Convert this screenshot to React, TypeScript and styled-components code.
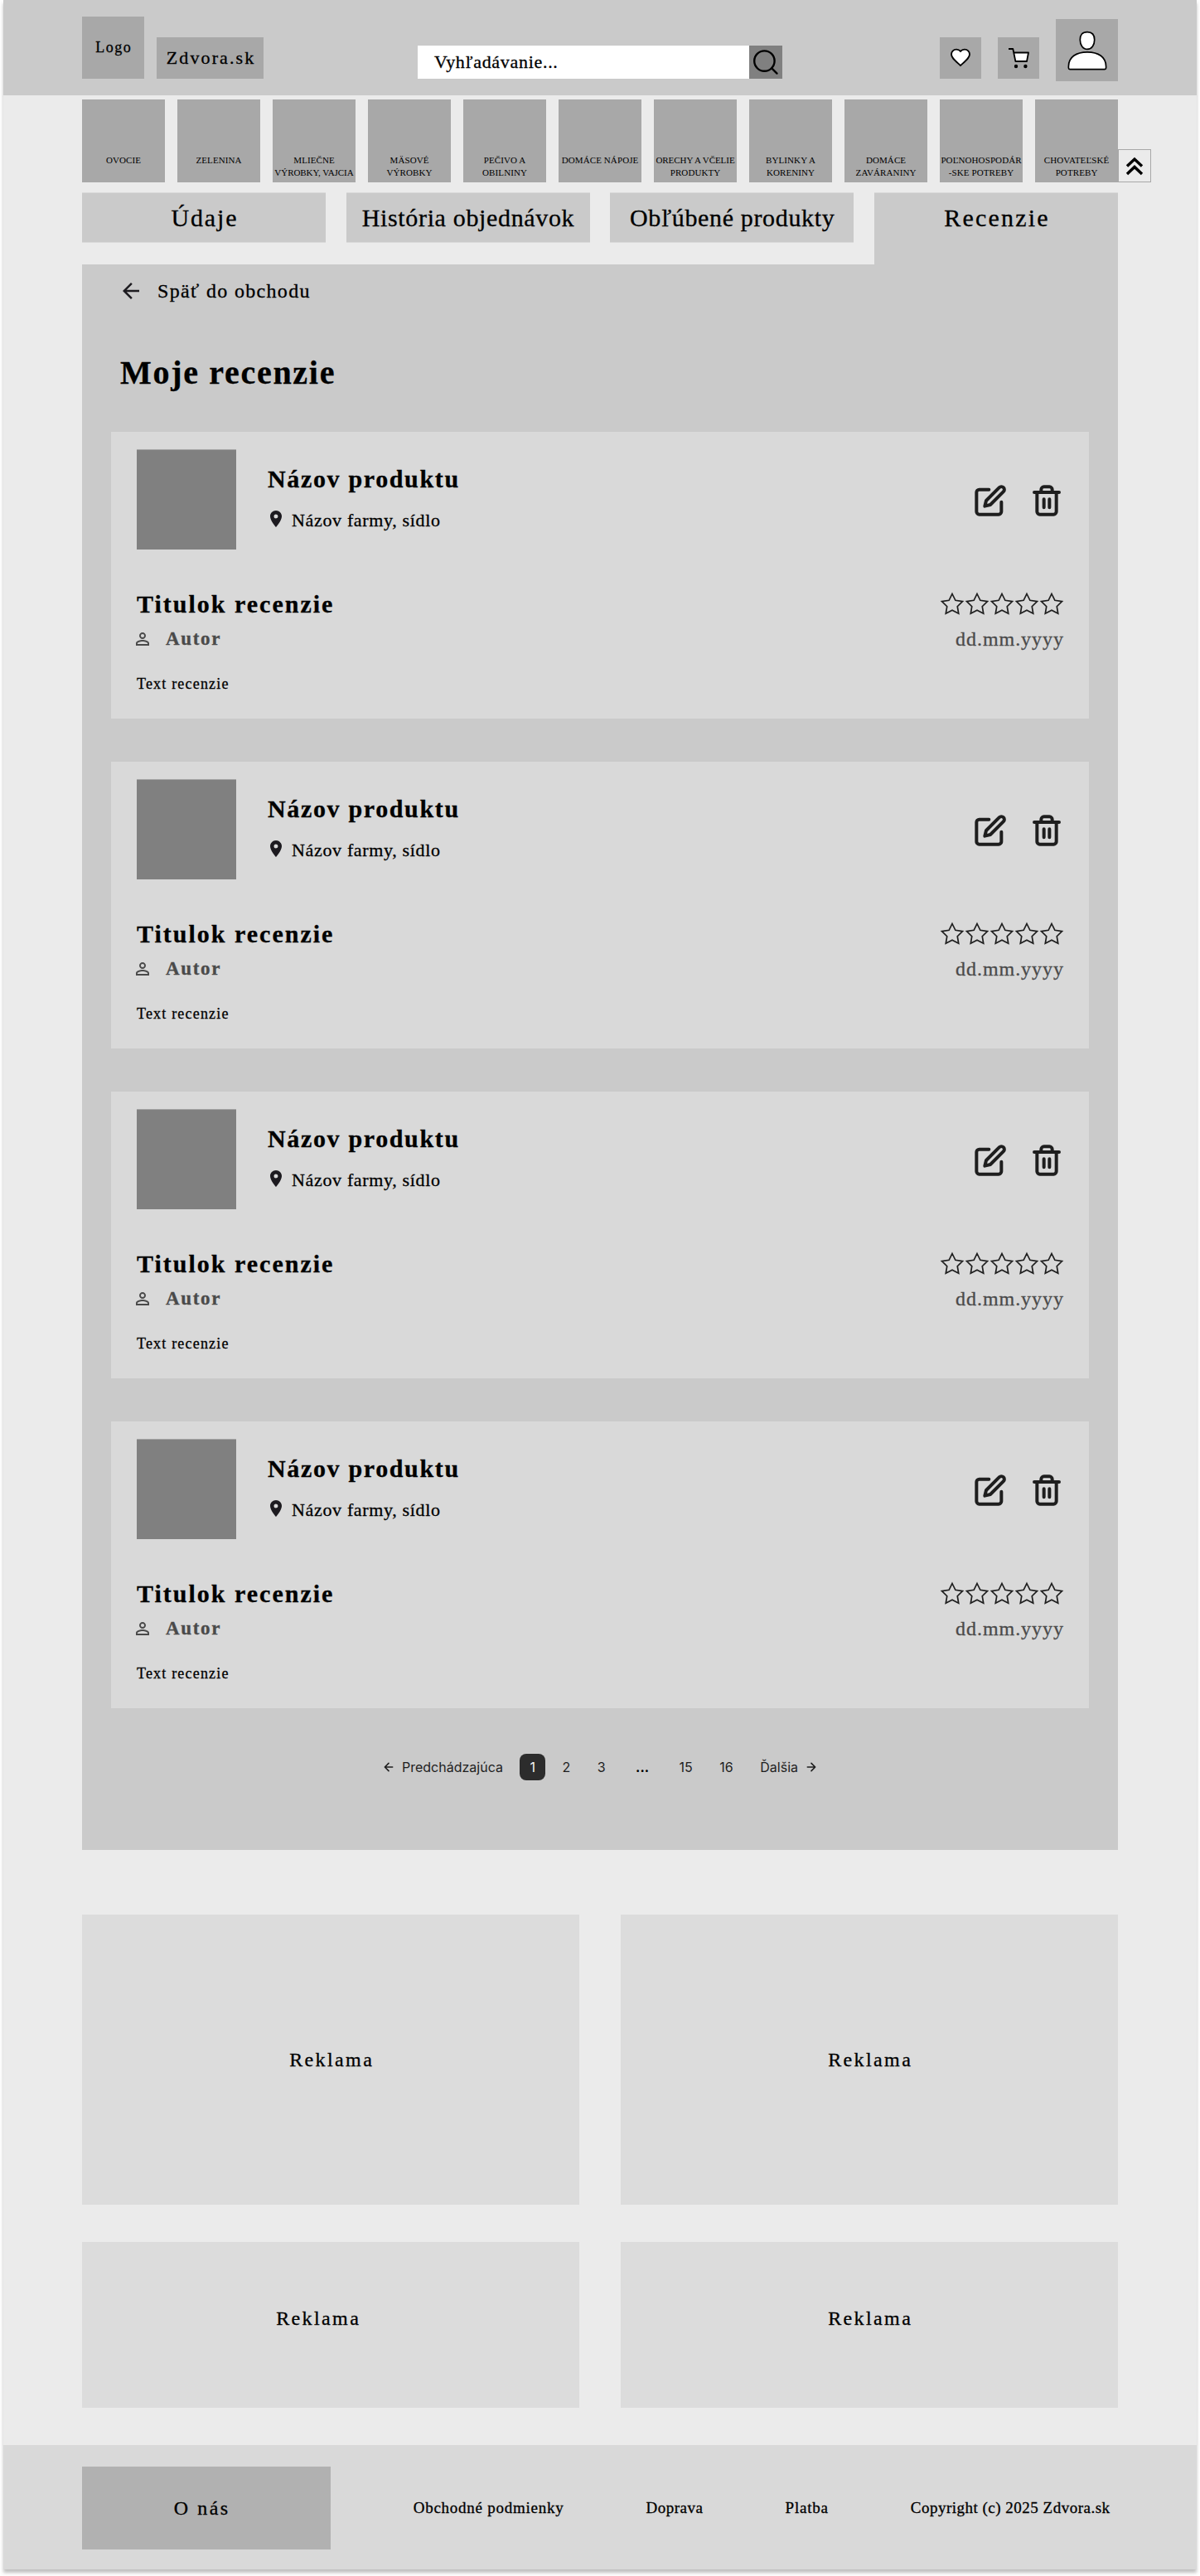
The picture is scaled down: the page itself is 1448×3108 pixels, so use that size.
import React from 'react';
import styled, { createGlobalStyle } from 'styled-components';

const GlobalStyle = createGlobalStyle`
  * { box-sizing: border-box; }
  body { margin: 0; background: #fff; }
`;

const Page = styled.div`
  width: 1440px;
  height: 3100px;
  margin: 0 4px 8px;
  background: #ebebeb;
  box-shadow: 0 4px 4px rgba(0, 0, 0, 0.25);
  color: #000;
  font-family: "Liberation Serif", "Times New Roman", serif;
  -webkit-text-stroke: 0.3px currentColor;
`;

const Label = styled.span<{ $size: number; $spacing?: number; $bold?: boolean }>`
  font-size: ${p => p.$size}px;
  letter-spacing: ${p => p.$spacing ?? 0}px;
  margin-right: ${p => -(p.$spacing ?? 0)}px;
  font-weight: ${p => (p.$bold ? 700 : 400)};
  white-space: nowrap;
`;

const Header = styled.header`
  display: flex;
  align-items: flex-end;
  height: 115px;
  padding: 0 95px 20px;
  background: #cacaca;
`;

const Tile = styled.a<{ $width: number; $height: number }>`
  display: flex;
  align-items: center;
  justify-content: center;
  width: ${p => p.$width}px;
  height: ${p => p.$height}px;
  background: #a8a8a8;
`;

const Brand = styled.div`
  display: flex;
  align-items: flex-end;
  gap: 15px;
`;

const Search = styled.div`
  display: flex;
  height: 40px;
  margin-left: 186px;
`;

const SearchField = styled.div`
  display: flex;
  align-items: center;
  width: 400px;
  padding-left: 20px;
  background: #fff;
`;

const SearchButton = styled.button`
  width: 40px;
  height: 40px;
  padding: 0;
  border: 0;
  background: #808080;
  svg { display: block; }
`;

const Actions = styled.div`
  display: flex;
  align-items: flex-end;
  gap: 20px;
  margin-left: auto;
  > :last-child { margin-bottom: -3px; }
`;

const Categories = styled.nav`
  display: flex;
  align-items: flex-end;
  gap: 15px;
  margin: 5px 0 0 95px;
`;

const Category = styled.a`
  display: flex;
  flex-direction: column;
  align-items: center;
  width: 100px;
  height: 100px;
  padding-top: 66px;
  background: #a8a8a8;
  line-height: 15px;
  -webkit-text-stroke-width: 0;
`;

const CollapseButton = styled.button`
  width: 40px;
  height: 40px;
  margin-left: -15px;
  padding: 0;
  border: 1px solid #a8a8a8;
  background: #ebebeb;
  svg { display: block; margin: -1px; }
`;

const Tabs = styled.div`
  display: flex;
  justify-content: space-between;
  width: 1250px;
  height: 87px;
  margin: 12px 0 0 95px;
`;

const Tab = styled.div<{ $active?: boolean }>`
  display: flex;
  align-items: center;
  justify-content: center;
  width: 294px;
  height: ${p => (p.$active ? 87 : 61)}px;
  padding-bottom: ${p => (p.$active ? 26 : 0)}px;
  border-top: 1px solid #dadada;
  border-bottom: ${p => (p.$active ? '0' : '1px solid #dadada')};
  background: #cacaca;
`;

const Panel = styled.main`
  width: 1250px;
  height: 1913px;
  margin-left: 95px;
  padding: 0 35px;
  background: #cacaca;
`;

const BackLink = styled.a`
  display: flex;
  align-items: center;
  gap: 17px;
  height: 64px;
  padding-left: 9px;
`;

const Heading = styled.h1`
  margin: 37px 0 41px 11px;
  line-height: 60px;
  font-size: 40px;
  letter-spacing: 1.7px;
`;

const Reviews = styled.section`
  display: flex;
  flex-direction: column;
  gap: 52px;
`;

const Card = styled.article`
  height: 346px;
  padding: 21px 31px 0;
  background: #d9d9d9;
`;

const ProductRow = styled.div`
  display: flex;
  height: 121px;
`;

const Photo = styled.div`
  width: 120px;
  height: 121px;
  background: #808080;
  border-top: 1px solid #a5a5a5;
`;

const ProductInfo = styled.div`
  flex: 1;
  padding: 16px 0 0 38px;
`;

const ProductName = styled.div`
  display: flex;
  line-height: 40px;
  margin-bottom: 15px;
`;

const Farm = styled.div`
  display: flex;
  align-items: center;
  gap: 7px;
  line-height: 30px;
  svg { margin: 0 0 4px -2px; }
`;

const CardActions = styled.div`
  display: flex;
  align-items: center;
  gap: 28px;
  padding-top: 2px;
`;

const Line = styled.div<{ $top: number; $height: number; $muted?: boolean }>`
  display: flex;
  align-items: center;
  justify-content: space-between;
  height: ${p => p.$height}px;
  margin-top: ${p => p.$top}px;
  color: ${p => (p.$muted ? '#4a4a4a' : '#000')};
`;

const Stars = styled.div`
  display: flex;
  margin-right: -1px;
`;

const Author = styled.div`
  display: flex;
  align-items: center;
  gap: 16px;
  margin-left: -5px;
`;

const Pagination = styled.nav`
  display: flex;
  justify-content: center;
  gap: 8.5px;
  margin-top: 55px;
  font: 400 16px/16px Inter, sans-serif;
  -webkit-text-stroke-width: 0;
  color: #1e1e1e;
`;

const PageItem = styled.a<{ $current?: boolean; $wide?: boolean }>`
  display: flex;
  align-items: center;
  justify-content: center;
  gap: 8px;
  height: 32px;
  padding: 0 ${p => (p.$wide ? 16 : 12)}px;
  border-radius: 8px;
  background: ${p => (p.$current ? '#2c2c2c' : 'transparent')};
  color: ${p => (p.$current ? '#f5f5f5' : p.$wide ? '#000' : 'inherit')};
  font-weight: ${p => (p.$wide ? 700 : 400)};
`;

const Ads = styled.section`
  display: grid;
  grid-template-columns: 600px 600px;
  grid-template-rows: 350px 200px;
  gap: 45px 50px;
  margin: 78px 0 45px 95px;
`;

const Ad = styled.div<{ $right?: number; $bottom?: number }>`
  display: flex;
  align-items: center;
  justify-content: center;
  padding: 0 ${p => p.$right ?? 0}px ${p => p.$bottom ?? 0}px 0;
  background: #dcdcdc;
`;

const Footer = styled.footer`
  display: flex;
  align-items: center;
  gap: 99.7px;
  height: 150px;
  padding: 2px 0 0 95px;
  background: #d9d9d9;
`;

const About = styled.a`
  display: flex;
  align-items: center;
  justify-content: center;
  width: 300px;
  height: 100px;
  padding-right: 13px;
  background: #b1b1b1;
`;

const HeartIcon = () => (
  <svg width="26" height="26" viewBox="-1 -0.5 26 26" fill="#fff" stroke="#000" strokeWidth="1.7">
    <path transform="matrix(1.1 0 0 1.08 -1.2 -1.1)" d="M12 21 10.6 19.7C5.4 15 2 12.3 2 8.5 2 5.4 4.4 3 7.5 3c1.7 0 3.4.8 4.5 2.1C13.1 3.8 14.8 3 16.5 3 19.6 3 22 5.4 22 8.5c0 3.800-3.400 6.500-8.600 11.200z" />
  </svg>
);

const CartIcon = () => (
  <svg width="26" height="28" viewBox="0 0 26 28">
    <path d="M7.300 7.500H25L23 18H9.400z" fill="#fff" />
    <path d="M1 3H6.300L9.400 18H23L25 7.500H7.300" fill="none" stroke="#000" strokeWidth="1.8" strokeLinejoin="round" />
    <circle cx="10" cy="24" r="2.200" />
    <circle cx="21.400" cy="24" r="2.200" />
  </svg>
);

const ProfileIcon = () => (
  <svg width="48" height="48" viewBox="0 0 48 48" fill="#fff" stroke="#000" strokeWidth="1.7">
    <path d="M24 1.600C30 1.600 32.700 5 32.700 11S29.500 22.400 24 22.400 15.300 17 15.300 11 18 1.600 24 1.600Z" />
    <path d="M24 25.800C37.500 25.800 46.600 32 46.600 43v2q0 1.600-1.600 1.600H3q-1.600 0-1.600-1.600v-2C1.400 32 10.500 25.800 24 25.800Z" />
  </svg>
);

const SearchIcon = () => (
  <svg width="40" height="40" viewBox="0 0 40 40" fill="none" stroke="#000" strokeWidth="2.400" strokeLinecap="round">
    <circle cx="18.400" cy="18.600" r="12.200" />
    <path d="M27.200 27.300 33.500 33.600" />
  </svg>
);

const DoubleUpIcon = () => (
  <svg width="40" height="40" viewBox="0 0 40 40" fill="none" stroke="#000" strokeWidth="3.400">
    <path d="M11 20.600 20 12l9 8.600M11 30 20 21.400 29 30" />
  </svg>
);

const BackIcon = () => (
  <svg width="30" height="30" viewBox="0 0 24 24" fill="#1d1b20">
    <path d="M20 11H7.830l5.590-5.590L12 4l-8 8 8 8 1.410-1.410L7.830 13H20z" />
  </svg>
);

const PinIcon = () => (
  <svg width="24" height="24" viewBox="0 0 24 24" fill="#1d1b20">
    <path d="M12 2C8.130 2 5 5.130 5 9c0 5.250 7 13 7 13s7-7.750 7-13c0-3.870-3.130-7-7-7zm0 9.500a2.500 2.500 0 1 1 0-5 2.500 2.500 0 0 1 0 5z" />
  </svg>
);

const PersonIcon = () => (
  <svg width="24" height="24" viewBox="0 0 24 24" fill="#4a4a4a">
    <path d="M12 5.900a2.100 2.100 0 1 1 0 4.200 2.100 2.100 0 0 1 0-4.200m0 9c2.970 0 6.100 1.460 6.100 2.100v1.100H5.900V17c0-.640 3.130-2.100 6.100-2.100M12 4C9.790 4 8 5.790 8 8s1.790 4 4 4 4-1.790 4-4-1.790-4-4-4zm0 9c-2.670 0-8 1.340-8 4v3h16v-3c0-2.660-5.330-4-8-4z" />
  </svg>
);

const EditIcon = () => (
  <svg width="40" height="40" viewBox="0 0 24 24" fill="none" stroke="#1e1e1e" strokeWidth="2.400" strokeLinecap="round" strokeLinejoin="round">
    <path d="M11 4H4a2 2 0 0 0-2 2v14a2 2 0 0 0 2 2h14a2 2 0 0 0 2-2v-7" />
    <path d="M18.500 2.500a2.121 2.121 0 0 1 3 3L12 15l-4 1 1-4 9.500-9.500z" />
  </svg>
);

const TrashIcon = () => (
  <svg width="40" height="40" viewBox="0 0 24 24" fill="none" stroke="#1e1e1e" strokeWidth="2.400" strokeLinecap="round" strokeLinejoin="round">
    <path d="M3 6h18M19 6v14a2 2 0 0 1-2 2H7a2 2 0 0 1-2-2V6m3 0V4a2 2 0 0 1 2-2h4a2 2 0 0 1 2 2v2M10 11v6M14 11v6" />
  </svg>
);

const StarIcon = () => (
  <svg width="30" height="30" viewBox="0 0 24 24" fill="none" stroke="#1e1e1e" strokeWidth="1.350">
    <path d="M12 2l3.090 6.260L22 9.270l-5 4.870 1.180 6.880L12 17.770l-6.180 3.250L7 14.140 2 9.270l6.910-1.010z" />
  </svg>
);

const ArrowIcon = ({ next }: { next?: boolean }) => (
  <svg width="16" height="16" viewBox="0 0 16 16" fill="none" stroke="#1e1e1e" strokeWidth="1.600" strokeLinecap="round" strokeLinejoin="round">
    <path d={next ? 'M3.330 8h9.340M8 3.330 12.670 8 8 12.670' : 'M12.670 8H3.330M8 12.670 3.330 8 8 3.330'} />
  </svg>
);

const categories = [
  ['OVOCIE'],
  ['ZELENINA'],
  ['MLIEČNE', 'VÝROBKY, VAJCIA'],
  ['MÄSOVÉ', 'VÝROBKY'],
  ['PEČIVO A', 'OBILNINY'],
  ['DOMÁCE NÁPOJE'],
  ['ORECHY A VČELIE', 'PRODUKTY'],
  ['BYLINKY A', 'KORENINY'],
  ['DOMÁCE', 'ZAVÁRANINY'],
  ['POĽNOHOSPODÁR', '-SKE POTREBY'],
  ['CHOVATEĽSKÉ', 'POTREBY'],
];

const tabs = [
  { name: 'Údaje', spacing: 1.9 },
  { name: 'História objednávok', spacing: 0.65 },
  { name: 'Obľúbené produkty', spacing: 0.65 },
  { name: 'Recenzie', spacing: 2.2, active: true },
];

const ReviewCard = () => (
  <Card>
    <ProductRow>
      <Photo />
      <ProductInfo>
        <ProductName><Label $size={30} $spacing={1.65} $bold>Názov produktu</Label></ProductName>
        <Farm><PinIcon /><Label $size={22} $spacing={0.66}>Názov farmy, sídlo</Label></Farm>
      </ProductInfo>
      <CardActions><EditIcon /><TrashIcon /></CardActions>
    </ProductRow>
    <Line $top={46} $height={40}>
      <Label $size={30} $spacing={2} $bold>Titulok recenzie</Label>
      <Stars>{[1, 2, 3, 4, 5].map(n => <StarIcon key={n} />)}</Stars>
    </Line>
    <Line $top={7} $height={30} $muted>
      <Author><PersonIcon /><Label $size={23} $spacing={1.68} $bold>Autor</Label></Author>
      <Label $size={24} $spacing={0.96}>dd.mm.yyyy</Label>
    </Line>
    <Line $top={27} $height={24}><Label $size={18} $spacing={1.19}>Text recenzie</Label></Line>
  </Card>
);

const Advert = (props: { right?: number; bottom?: number }) => (
  <Ad $right={props.right} $bottom={props.bottom}><Label $size={24} $spacing={2.4}>Reklama</Label></Ad>
);

export default function App() {
  return (
    <>
      <GlobalStyle />
      <Page>
        <Header>
          <Brand>
            <Tile $width={75} $height={75}><Label $size={18} $spacing={1.5}>Logo</Label></Tile>
            <Tile $width={129} $height={50}><Label $size={22} $spacing={2.1}>Zdvora.sk</Label></Tile>
          </Brand>
          <Search>
            <SearchField><Label $size={22} $spacing={0.7}>Vyhľadávanie...</Label></SearchField>
            <SearchButton><SearchIcon /></SearchButton>
          </Search>
          <Actions>
            <Tile $width={50} $height={50}><HeartIcon /></Tile>
            <Tile $width={50} $height={50}><CartIcon /></Tile>
            <Tile $width={75} $height={75}><ProfileIcon /></Tile>
          </Actions>
        </Header>
        <Categories>
          {categories.map(lines => (
            <Category key={lines[0]}>
              {lines.map(line => <Label key={line} $size={11} $spacing={line.length > 14 ? -0.05 : 0.1}>{line}</Label>)}
            </Category>
          ))}
          <CollapseButton><DoubleUpIcon /></CollapseButton>
        </Categories>
        <Tabs>
          {tabs.map(tab => (
            <Tab key={tab.name} $active={tab.active}><Label $size={30} $spacing={tab.spacing}>{tab.name}</Label></Tab>
          ))}
        </Tabs>
        <Panel>
          <BackLink><BackIcon /><Label $size={24} $spacing={1.33}>Späť do obchodu</Label></BackLink>
          <Heading>Moje recenzie</Heading>
          <Reviews>{[1, 2, 3, 4].map(n => <ReviewCard key={n} />)}</Reviews>
          <Pagination>
            <PageItem><ArrowIcon />Predchádzajúca</PageItem>
            <PageItem $current>1</PageItem>
            <PageItem>2</PageItem>
            <PageItem>3</PageItem>
            <PageItem $wide>...</PageItem>
            <PageItem>15</PageItem>
            <PageItem>16</PageItem>
            <PageItem>Ďalšia<ArrowIcon next /></PageItem>
          </Pagination>
        </Panel>
        <Ads>
          <Advert />
          <Advert />
          <Advert right={32} bottom={16} />
          <Advert bottom={16} />
        </Ads>
        <Footer>
          <About><Label $size={24} $spacing={2.5}>O nás</Label></About>
          <Label $size={19} $spacing={0.75}>Obchodné podmienky</Label>
          <Label $size={19} $spacing={0.5}>Doprava</Label>
          <Label $size={19} $spacing={0.79}>Platba</Label>
          <Label $size={19} $spacing={0.5}>Copyright (c) 2025 Zdvora.sk</Label>
        </Footer>
      </Page>
    </>
  );
}
